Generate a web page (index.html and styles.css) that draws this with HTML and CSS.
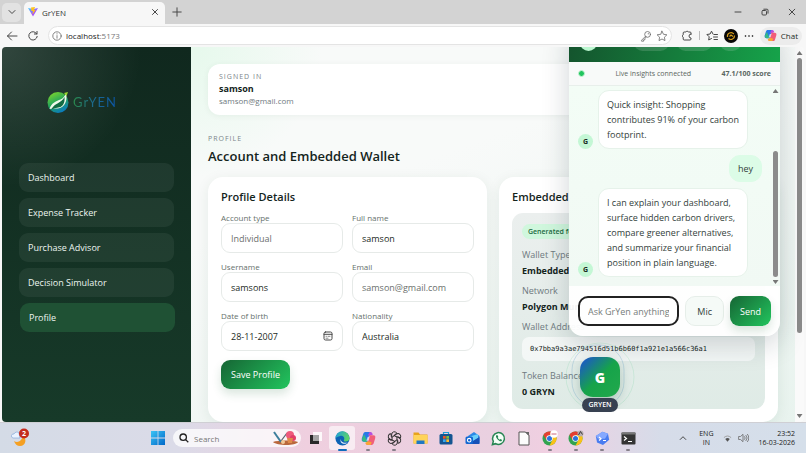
FILE: index.html
```html
<!DOCTYPE html>
<html lang="en">
<head>
    <meta charset="UTF-8">
    <meta name="viewport" content="width=device-width, initial-scale=1.0">
    <title>GrYEN</title>
    <link rel="stylesheet" href="styles.css">
</head>
<body>

<!-- Tab strip -->
<header class="tabstrip">
    <button class="tab-menu" aria-label="Tab actions">
        <svg width="10" height="10" viewBox="0 0 10 10"><path class="line" d="M2 3.5l3 3 3-3"/></svg>
    </button>
    <div class="tab">
        <svg width="10" height="10" viewBox="0 0 20 20">
            <defs><linearGradient id="vite" x1="0" y1="0" x2="1" y2="1"><stop offset="0" stop-color="#41d1ff"/><stop offset=".6" stop-color="#a855f7"/></linearGradient></defs>
            <path fill="url(#vite)" d="M0 2l10 17L20 2l-9 2z"/>
            <path fill="#ffc21c" d="M6 1l8-1-2 6h3l-6 9 1-7H7z"/>
        </svg>
        <span class="tab-title">GrYEN</span>
        <button class="plain" aria-label="Close tab">
            <svg width="8" height="8" viewBox="0 0 8 8"><path class="line" d="M1.5 1.5l5 5M6.5 1.5l-5 5"/></svg>
        </button>
    </div>
    <button class="plain new-tab" aria-label="New tab">
        <svg width="10" height="10" viewBox="0 0 10 10"><path class="line" d="M5 .8v8.4M.8 5h8.4"/></svg>
    </button>
    <div class="window-controls">
        <button class="plain" aria-label="Minimize"><svg width="8" height="8" viewBox="0 0 8 8"><path class="line" d="M1 4h6"/></svg></button>
        <button class="plain" aria-label="Restore"><svg width="8" height="8" viewBox="0 0 8 8"><rect class="line" x="1" y="2.5" width="4.5" height="4.5" rx="1"/><path class="line" d="M2.8 1.2H6a1 1 0 0 1 1 1v3"/></svg></button>
        <button class="plain" aria-label="Close"><svg width="8" height="8" viewBox="0 0 8 8"><path class="line" d="M1.2 1.2l5.6 5.6M6.8 1.2L1.2 6.8"/></svg></button>
    </div>
</header>

<!-- Address bar -->
<nav class="toolbar">
    <button class="plain" aria-label="Back"><svg width="12" height="12" viewBox="0 0 12 12"><path class="line" d="M11 6H1.5M5.5 2L1.5 6l4 4"/></svg></button>
    <button class="plain" aria-label="Refresh"><svg width="12" height="12" viewBox="0 0 12 12"><path class="line" d="M9.8 4A4.2 4.2 0 1 0 10.2 6.4M10 1.4V4H7.4"/></svg></button>
    <div class="address">
        <svg width="10" height="10" viewBox="0 0 10 10"><circle class="line thin" cx="5" cy="5" r="4.2"/><path class="line thin" d="M5 4.6v2.6M5 2.7v.3"/></svg>
        <span class="url">localhost<span class="port">:5173</span></span>
        <svg width="12" height="12" viewBox="0 0 12 12"><circle class="line thin" cx="7.6" cy="4.4" r="2.9"/><path class="line thin" d="M5.4 6.4L1.6 10.2v1h2V9.8h1.3V8.3l1.3-1.2M8.3 3.5v.5"/></svg>
        <svg width="12" height="12" viewBox="0 0 12 12"><path class="line thin" d="M6 1.2l1.5 3.1 3.4.5-2.5 2.4.6 3.4L6 9l-3 1.6.6-3.4-2.5-2.4 3.4-.5z"/></svg>
    </div>
    <div class="extensions">
        <svg width="12" height="12" viewBox="0 0 12 12"><path class="line" d="M10 4V3a1 1 0 0 0-1-1H7.3a1.3 1.3 0 0 0-2.4 0H3.2a1 1 0 0 0-1 1v1.800a1.3 1.3 0 0 0 0 2.4V9a1 1 0 0 0 1 1H9a1 1 0 0 0 1-1V8a2 2 0 1 1 0-4z"/></svg>
        <i class="divider"></i>
        <svg width="12" height="12" viewBox="0 0 12 12"><path class="line" d="M7 4L5.5 1.2 4.1 4l-3.2.5 2.3 2.3-.5 3.2 2.8-1.5M8 4.5h3.5M7.5 7h4M8 9.5h3.5"/></svg>
        <svg width="14" height="14" viewBox="0 0 14 14"><circle cx="7" cy="7" r="7" fill="#080808"/><path d="M3.5 8A3.6 3.6 0 0 1 9.8 5M10.500 6.500A3.600 3.600 0 0 1 4.500 9.500M5.500 7.500L7 6l2 1.500" fill="none" stroke="#d79d1c" stroke-width="1.2"/></svg>
        <svg width="10" height="10" viewBox="0 0 10 10"><circle cx="1.5" cy="5" r=".8"/><circle cx="5" cy="5" r=".8"/><circle cx="8.5" cy="5" r=".8"/></svg>
        <button class="copilot">
            <svg width="13" height="13" viewBox="0 0 14 14"><use href="#copilot-shape"/></svg>
            Chat
        </button>
    </div>
</nav>

<!-- Web page -->
<div class="viewport">
    <aside class="sidebar">
        <div class="brand">
            <svg width="24" height="24" viewBox="0 0 24 24">
                <defs><linearGradient id="globe" x1=".2" y1="0" x2=".7" y2="1"><stop offset="0" stop-color="#7ed62c"/><stop offset=".5" stop-color="#22a45c"/><stop offset="1" stop-color="#0878c8"/></linearGradient></defs>
                <circle cx="12" cy="12.5" r="10.5" fill="url(#globe)"/>
                <path d="M3.5 19c2-6.5 7-8 11-9.5 2.5-1 4.5-3.5 5.5-6 1.5 6-.5 11-4 13.5-4 2.500-8 1-12.500 2z" fill="#eef8ea"/>
                <path d="M5 20C9 12 15 14 18.5 7c.5 5-1 8.5-4 10-3 1.2-6 .5-9.500 3z" fill="#126b43"/>
                <path d="M18 3l4-1-1.5 4" fill="#9bda2e"/>
            </svg>
            <span class="brand-name">GrYEN</span>
        </div>
        <nav class="menu">
            <a href="#">Dashboard</a>
            <a href="#">Expense Tracker</a>
            <a href="#">Purchase Advisor</a>
            <a href="#">Decision Simulator</a>
            <a href="#" class="active">Profile</a>
        </nav>
    </aside>

    <main class="content">
        <section class="account">
            <p class="eyebrow">SIGNED IN</p>
            <strong class="account-name">samson</strong>
            <p class="account-email">samson@gmail.com</p>
        </section>

        <p class="eyebrow">PROFILE</p>
        <h1>Account and Embedded Wallet</h1>

        <div class="cards">
            <form class="card">
                <h2>Profile Details</h2>
                <div class="fields">
                    <div class="field">
                        <label for="type">Account type</label>
                        <input type="text" id="type" value="Individual" disabled>
                    </div>
                    <div class="field">
                        <label for="name">Full name</label>
                        <input type="text" id="name" value="samson">
                    </div>
                    <div class="field">
                        <label for="username">Username</label>
                        <input type="text" id="username" value="samsons">
                    </div>
                    <div class="field">
                        <label for="email">Email</label>
                        <input type="email" id="email" value="samson@gmail.com" disabled>
                    </div>
                    <div class="field">
                        <label for="dob">Date of birth</label>
                        <div class="date-box">
                            <input type="text" id="dob" value="28-11-2007">
                            <button type="button" class="plain" aria-label="Open calendar">
                                <svg width="10" height="10" viewBox="0 0 10 10"><rect class="line" x="1" y="1" width="8" height="8" rx="1.5"/><path class="line" d="M1 3.3h8"/><path class="line thin" d="M3 5.300h.5M5 5.300h2M3 7.200h2"/></svg>
                            </button>
                        </div>
                    </div>
                    <div class="field">
                        <label for="nationality">Nationality</label>
                        <input type="text" id="nationality" value="Australia">
                    </div>
                </div>
                <button type="button" class="primary">Save Profile</button>
            </form>

            <section class="card">
                <h2>Embedded Wallet</h2>
                <div class="wallet">
                    <span class="badge">Generated for you</span>
                    <dl>
                        <dt>Wallet Type</dt>
                        <dd>Embedded</dd>
                        <dt>Network</dt>
                        <dd>Polygon Mumbai</dd>
                        <dt>Wallet Address</dt>
                        <dd class="hash">0x7bba9a3ae794516d51b6b60f1a921e1a566c36a1</dd>
                        <dt>Token Balance</dt>
                        <dd>0 GRYN</dd>
                    </dl>
                </div>
            </section>
        </div>
    </main>

    <div class="scrollbar page-scroll"><i class="up"></i><i class="thumb"></i><i class="down"></i></div>

    <!-- Chat assistant -->
    <section class="chat">
        <div class="chat-head">
            <i class="chat-logo"></i>
            <i class="pill"></i>
            <i class="pill"></i>
            <i class="pill small"></i>
        </div>
        <div class="chat-status">
            <i class="dot"></i>
            <span>Live insights connected</span>
            <strong>47.1/100 score</strong>
        </div>
        <div class="chat-body">
            <div class="messages">
                <div class="message">
                    <span class="avatar">G</span>
                    <p class="bubble">Quick insight: Shopping contributes 91% of your carbon footprint.</p>
                </div>
                <div class="message mine">
                    <p class="bubble">hey</p>
                </div>
                <div class="message">
                    <span class="avatar">G</span>
                    <p class="bubble">I can explain your dashboard, surface hidden carbon drivers, compare greener alternatives, and summarize your financial position in plain language.</p>
                </div>
            </div>
            <div class="scrollbar chat-scroll"><i class="up"></i><i class="thumb"></i><i class="down"></i></div>
        </div>
        <form class="composer">
            <input type="text" aria-label="Message" placeholder="Ask GrYen anything">
            <button type="button" class="secondary">Mic</button>
            <button type="button" class="primary">Send</button>
        </form>
    </section>

    <div class="launcher">
        <svg class="rings" width="72" height="72" viewBox="0 0 72 72"><rect x="8" y="4" width="52" height="62" rx="25" fill="none" stroke="#6aa3c8" stroke-opacity=".3"/><circle cx="36" cy="36" r="34" fill="none" stroke="#4fc586" stroke-opacity=".16"/></svg>
        <button class="launch-button">G</button>
        <span class="launch-label">GRYEN</span>
    </div>
</div>

<!-- Taskbar -->
<footer class="taskbar">
    <div class="widgets">
        <svg width="20" height="20" viewBox="0 0 20 20">
            <path d="M4 13c3 2 8 1 9-6 4 4 3 11-3 11-3 0-5-2-6-5z" fill="#f5a023"/>
            <path d="M3 10a2 2 0 0 1 1-4 3 3 0 0 1 5-1l1 5z" fill="#eaf3ff" stroke="#86a9d8" stroke-width=".7"/>
            <circle cx="14" cy="5.5" r="5" fill="#c42b1c"/>
            <text x="14" y="8" text-anchor="middle" class="count">2</text>
        </svg>
    </div>

    <div class="apps">
        <button class="app" aria-label="Start"><svg width="14" height="14" viewBox="0 0 14 14"><defs><linearGradient id="win" x2="1" y2="1"><stop stop-color="#3cc4f5"/><stop offset="1" stop-color="#0067c8"/></linearGradient></defs><path fill="url(#win)" d="M0 0h6.6v6.6H0zM7.4 0H14v6.6H7.4zM0 7.4h6.6V14H0zM7.4 7.4H14V14H7.4z"/></svg></button>
        <label class="search">
            <svg width="10" height="10" viewBox="0 0 10 10"><circle cx="4.2" cy="4.2" r="3.2" fill="none" stroke="#222" stroke-width="1.3"/><path d="M6.6 6.6l2.7 2.7" stroke="#222" stroke-width="1.3"/></svg>
            <input type="text" placeholder="Search" aria-label="Search">
            <svg width="28" height="16" viewBox="0 0 28 16"><path d="M2 12c5-2 19-2 25 0-2 4-21 4-25 0z" fill="#b9673c"/><path d="M3 2l7 10" stroke="#3d7e9c" stroke-width="2"/><path d="M16 3l-6 8" stroke="#55606c" stroke-width="1.2"/><circle cx="19" cy="5" r="4" fill="#ee5a7c"/><circle cx="22" cy="8" r="3" fill="#e23e68"/><path d="M16 8h6l-1 5h-4z" fill="#e08a4a"/><circle cx="12" cy="12" r="2" fill="#f2c896"/></svg>
        </label>
        <button class="app" aria-label="Task view"><svg width="14" height="14" viewBox="0 0 14 14"><path fill="#292929" d="M1 4h9v9H1z"/><path fill="#fff" fill-opacity=".85" d="M4 1h9v9H4z"/><path fill="#a4a4a4" d="M4 4h6v6H4z"/></svg></button>
        <button class="app current" aria-label="Edge"><svg width="15" height="15" viewBox="0 0 16 16"><defs><linearGradient id="edge" x2="1" y2=".3"><stop stop-color="#1d9ddf"/><stop offset="1" stop-color="#5bd36a"/></linearGradient></defs><circle cx="8" cy="8" r="7.5" fill="#0d63b5"/><path fill="url(#edge)" d="M.5 8A7.5 7.5 0 0 1 15.5 7.5c0 2.5-2 3.8-4 3.8-1.8 0-2.5-.8-2-1.5C11 7 8.5 4.8 5.5 5.2 3 5.5 1 7 .5 8z"/><path fill="#fff" d="M6.5 8c-1 3 2 5.5 7 4.3-3 3-9.500 1-7-4.300z" fill-opacity=".9"/></svg></button>
        <button class="app running" aria-label="Copilot"><svg width="15" height="15" viewBox="0 0 14 14"><g id="copilot-shape"><path fill="#2879e8" d="M4 1h5L6.5 10H3C1 10 .3 9 .8 7L2 3c.4-1.300 1-2 2-2z"/><path fill="#35b984" d="M1 7l2-4 3 7H3C1.5 10 .7 9 1 7z"/><path fill="#b550df" d="M8 1h1c1 0 1.5.8 2 2.5l-3 1L6.5 4z"/><path fill="#f15e79" d="M8 4h3.5c1.7 0 2.2 1 1.7 3L12 11c-.4 1.300-1 2-2 2H5z"/><path fill="#f8a636" d="M6.5 9.5l3.5 1-1 2.5H6c-1.200 0-1.700-.8-2-2z"/><path fill="#fff" d="M6.2 5.5l2-.5L7 9l-2 .2z" fill-opacity=".7"/></g></svg></button>
        <button class="app running" aria-label="ChatGPT"><svg width="15" height="15" viewBox="0 0 16 16"><g fill="none" stroke="#2b2b2b"><path id="petal" d="M8 5L5 6.700V3.800a2.900 2.900 0 0 1 5.500-1.400L8 4"/><use href="#petal" transform="rotate(60 8 8)"/><use href="#petal" transform="rotate(120 8 8)"/><use href="#petal" transform="rotate(180 8 8)"/><use href="#petal" transform="rotate(240 8 8)"/><use href="#petal" transform="rotate(300 8 8)"/></g></svg></button>
        <button class="app" aria-label="File Explorer"><svg width="15" height="14" viewBox="0 0 15 14"><path fill="#e8a31c" d="M.5 1.5h5l1.5 2h7.5v9H.5z"/><path fill="#ffd45a" d="M.5 4h14v8.5H.5z"/><path fill="#1f78c4" d="M3.5 9.5h8V13h-8z"/></svg></button>
        <button class="app" aria-label="Store"><svg width="14" height="14" viewBox="0 0 14 14"><path d="M4.5 4V1.5h5V4" fill="none" stroke="#1b9fd9" stroke-width="1.2"/><rect x=".5" y="3" width="13" height="10.5" rx="1.5" fill="#145591"/><path fill="#f05325" d="M4 5h2.7v2.7H4z"/><path fill="#80bc3f" d="M7.3 5H10v2.7H7.3z"/><path fill="#37a8ec" d="M4 8.3h2.7V11H4z"/><path fill="#fdbb30" d="M7.3 8.3H10V11H7.3z"/></svg></button>
        <button class="app" aria-label="Outlook"><svg width="15" height="14" viewBox="0 0 15 14"><path fill="#2a89e6" d="M3 5l6-4 5.5 4v6.5l-1 1.500H4z"/><path fill="#6bd0fa" d="M5 5.5L13 3v4l-5 3z"/><path fill="#1551b8" d="M8 10l6.5-4v7H6z"/><rect x=".5" y="5.5" width="7.5" height="7.5" rx="1.5" fill="#1267d2"/><circle cx="4.2" cy="9.2" r="1.8" fill="none" stroke="#fff" stroke-width="1.1"/></svg></button>
        <button class="app" aria-label="WhatsApp"><svg width="15" height="15" viewBox="0 0 16 16"><path d="M1.5 14.5l1-3.5A6.3 6.3 0 1 1 5 13.5z" fill="#f4fff7" stroke="#268553" stroke-width="1.6"/><path d="M5.6 4.5c-1.5 1.5 2.5 7 5.5 6.5l.8-1.5-1.8-1-.9.8c-1-.4-1.700-1.200-2-2l.6-.9-.7-1.900z" fill="#268553"/></svg></button>
        <button class="app" aria-label="LibreOffice"><svg width="12" height="15" viewBox="0 0 12 15"><path d="M1 1h6.5L11 4.5V14H1z" fill="#fcfcfc" stroke="#555"/><path d="M7 1l4 4V1z" fill="#666"/></svg></button>
        <button class="app running" aria-label="Chrome"><svg width="16" height="16" viewBox="0 0 16 16"><g id="chrome-shape"><circle cx="7.5" cy="8.5" r="7" fill="#32a350"/><path fill="#e53e30" d="M1.4 5A7 7 0 0 1 13.6 5H7.5l-3 5z"/><path fill="#fbc116" d="M13.6 5a7 7 0 0 1-6.100 10.500L10.500 10l-3-5z"/><circle cx="7.5" cy="8.5" r="3.2" fill="#fff"/><circle cx="7.5" cy="8.5" r="2.5" fill="#2b73dd"/></g><circle cx="12" cy="4" r="3.8" fill="#fff"/><path d="M9.5 4h5" stroke="#cf6679"/></svg></button>
        <button class="app running" aria-label="Chrome profile"><svg width="16" height="16" viewBox="0 0 16 16"><use href="#chrome-shape"/><circle cx="12.5" cy="3.500" r="3" fill="#b8aeb0"/><path d="M10.5 5l2-3.500 2 3" stroke="#3c393b" fill="none"/></svg></button>
        <button class="app running" aria-label="Dev shell"><svg width="15" height="15" viewBox="0 0 15 15"><path fill="#487cf0" d="M7.5.8l5.5 2 1.2 6L8 14l-6-2.500L.8 5z"/><path fill="#85a9ff" d="M7.5.8l5.5 2-3 5H3L.8 5z"/><path d="M4 6l2 1.8-2 1.700M8 9.500h3" fill="none" stroke="#fff" stroke-width="1.2"/></svg></button>
        <button class="app running" aria-label="Terminal"><svg width="15" height="13" viewBox="0 0 15 13"><rect x=".5" y=".5" width="14" height="12" rx="1" fill="#343434"/><path fill="#777" d="M.5.5h14v2H.5z"/><path d="M3 4.5l2.500 2L3 8.500M7 9.500h4" fill="none" stroke="#fff" stroke-width="1.2"/></svg></button>
    </div>

    <div class="tray">
        <svg width="8" height="8" viewBox="0 0 8 8"><path class="line" d="M1.2 5.5L4 2.7l2.8 2.8"/></svg>
        <span class="lang">ENG<br>IN</span>
        <svg width="9" height="9" viewBox="0 0 10 10"><path d="M1 4a6 6 0 0 1 8 0" fill="none" stroke="#999"/><path d="M2.5 5.5a4 4 0 0 1 5 0L5 8.5z" fill="#555"/></svg>
        <svg width="11" height="10" viewBox="0 0 11 10"><path class="line thin" d="M1 3.5h1.5L5 1.3v7.4L2.5 6.5H1zM6.5 3.5a2 2 0 0 1 0 3M8 2.3a4 4 0 0 1 0 5.4M9.5 1.3a5.5 5.5 0 0 1 0 7.4"/></svg>
        <span class="clock">23:52<br>16-03-2026</span>
    </div>
</footer>

</body>
</html>
```

FILE: styles.css
```css
* {
    box-sizing: border-box;
}

body {
    margin: 0;
    height: 100vh;
    display: flex;
    flex-direction: column;
    overflow: hidden;
    font-family: "Open Sans", "Noto Sans", sans-serif;
    font-size: 9px;
    color: #1b2a24;
    background-color: #f7f7f7;
}

h1, h2, p, dl, dd {
    margin: 0;
}

button, input {
    font-family: inherit;
    font-size: 9px;
    color: inherit;
}

svg {
    display: block;
    flex: none;
}

.line {
    fill: none;
    stroke: #484848;
    stroke-width: 1;
    stroke-linecap: round;
    stroke-linejoin: round;
}

.line.thin {
    stroke: #6a6a6a;
    stroke-width: 0.8;
}

.plain {
    display: flex;
    padding: 0;
    border: none;
    background: none;
}

/* Browser window */
.tabstrip {
    display: flex;
    align-items: center;
    height: 24px;
    padding: 0 10px 0 2px;
    background-color: #d3d3d3;
}

.tab-menu {
    display: flex;
    align-items: center;
    justify-content: center;
    width: 19px;
    height: 19px;
    padding: 0;
    border: none;
    border-radius: 5px;
    background-color: #e2e2e2;
}

.tab {
    display: flex;
    align-items: center;
    gap: 4px;
    width: 141px;
    height: 22px;
    margin: 2px 0 0 3px;
    padding: 0 6px 2px 4px;
    border-radius: 5px 5px 0 0;
    background-color: #f7f7f7;
}

.tab-title {
    flex: 1;
    font-size: 8px;
    color: #333;
}

.new-tab {
    margin-left: 7px;
}

.window-controls {
    display: flex;
    gap: 19px;
    margin-left: auto;
}

.toolbar {
    display: flex;
    align-items: center;
    gap: 9px;
    height: 23px;
    padding: 0 4px 0 6px;
    background-color: #f7f7f7;
}

.address {
    flex: 1;
    display: flex;
    align-items: center;
    gap: 4px;
    height: 19px;
    padding: 0 3px;
    border: 1px solid #e4e4e4;
    border-radius: 10px;
    background-color: #fff;
}

.url {
    flex: 1;
    font-size: 8px;
    color: #222;
}

.port {
    color: #777;
}

.extensions {
    display: flex;
    align-items: center;
    gap: 6px;
}

.divider {
    width: 1px;
    height: 9px;
    background-color: #bbb;
}

.copilot {
    display: flex;
    align-items: center;
    gap: 4px;
    height: 18px;
    padding: 0 4px;
    border: none;
    border-radius: 9px;
    background-color: #ececec;
    font-size: 8px;
}

/* Page */
.viewport {
    position: relative;
    flex: 1;
    min-height: 0;
    display: flex;
    margin: 0 2px;
    border-radius: 4px;
    overflow: hidden;
    background: radial-gradient(circle at 190px 0, #e6f9ec, rgba(230, 249, 236, 0) 130px),
        linear-gradient(160deg, #f8faf9 40%, #e8f3ee);
}

.sidebar {
    flex: 0 0 189px;
    padding: 43px 17px 0;
    background: radial-gradient(circle at 0 0, rgba(255, 255, 255, 0.14), transparent 140px),
        linear-gradient(#10281e, #173a29);
}

.brand {
    display: flex;
    align-items: center;
    gap: 3px;
    padding-left: 27px;
}

.brand-name {
    font-family: Lato, sans-serif;
    font-size: 13px;
    letter-spacing: 1px;
    color: transparent;
    background: linear-gradient(90deg, #2b8b4b, #1c6a8c 45%, #0b55a8);
    -webkit-background-clip: text;
    background-clip: text;
}

.menu {
    display: flex;
    flex-direction: column;
    gap: 6px;
    margin-top: 49px;
}

.menu a {
    height: 29px;
    padding: 0 9px;
    border-radius: 9px;
    background-color: rgba(255, 255, 255, 0.06);
    font-size: 9px;
    line-height: 29px;
    color: #edf5f0;
    text-decoration: none;
}

.menu a.active {
    background-color: #1f5134;
    transform: translateX(1px);
}

.content {
    flex: 1;
    min-width: 0;
    padding: 17px;
}

.account {
    margin-bottom: 19px;
    padding: 8px 11px;
    border-radius: 12px;
    background-color: #fff;
    box-shadow: 0 1px 6px rgba(20, 60, 40, 0.06);
}

.eyebrow {
    font-size: 7px;
    line-height: 10px;
    letter-spacing: 1px;
    color: #7b858a;
}

.account-name {
    display: block;
    font-size: 9px;
    line-height: 13px;
    color: #14241c;
}

.account-email {
    font-size: 8px;
    line-height: 12px;
    color: #6f7a80;
}

h1 {
    margin: 3px 0 12px;
    font-size: 13px;
    font-weight: 600;
    line-height: 18px;
    color: #14241c;
}

.cards {
    display: grid;
    grid-template-columns: 1fr 1fr;
    gap: 12px;
}

.card {
    min-width: 0;
    padding: 13px;
    border-radius: 15px;
    background-color: #fff;
    box-shadow: 0 3px 14px rgba(20, 60, 40, 0.08);
}

h2 {
    margin: 0 0 10px;
    font-size: 11px;
    font-weight: 600;
    line-height: 13px;
    color: #14241c;
}

.fields {
    display: grid;
    grid-template-columns: repeat(2, minmax(0, 1fr));
    gap: 9px;
    margin-bottom: 9px;
}

.field label {
    display: block;
    font-size: 8px;
    line-height: 10px;
    color: #66716c;
}

.field > input,
.date-box {
    width: 100%;
    height: 30px;
    padding: 0 9px;
    border: 1px solid #e6eae8;
    border-radius: 9px;
    background-color: #fff;
}

.field input:disabled {
    color: #6b6f6d;
}

.date-box {
    display: flex;
    align-items: center;
}

.date-box input {
    flex: 1;
    min-width: 0;
    padding: 0;
    border: none;
}

.primary {
    height: 29px;
    padding: 0 10px;
    border: none;
    border-radius: 9px;
    background: linear-gradient(135deg, #166534, #22c55e);
    box-shadow: 0 5px 10px rgba(22, 101, 52, 0.16);
    color: #fff;
}

.wallet {
    padding: 11px 10px 10px;
    border-radius: 11px;
    background: linear-gradient(#ebefee, #dfebe6);
}

.badge {
    display: inline-block;
    padding: 0 6px;
    border-radius: 8px;
    background-color: #d0f7dd;
    font-size: 7px;
    font-weight: 600;
    line-height: 15px;
    vertical-align: top;
    color: #206b40;
}

.wallet dl {
    margin-top: 9px;
}

.wallet dt {
    line-height: 14px;
    color: #6f7a80;
}

.wallet dd {
    margin: 2px 0 6px;
    font-weight: bold;
    line-height: 14px;
    color: #14241c;
}

.wallet dd:last-child {
    margin-bottom: 0;
}

.wallet .hash {
    margin: 3px 0 8px;
    padding: 0 8px;
    border-radius: 7px;
    background-color: rgba(255, 255, 255, 0.6);
    font-family: "DejaVu Sans Mono", monospace;
    font-size: 7px;
    font-weight: normal;
    line-height: 24px;
}

/* Scrollbars */
.scrollbar {
    display: flex;
    flex-direction: column;
    align-items: center;
}

.up, .down {
    width: 6px;
    height: 4px;
    background-color: #777;
    clip-path: polygon(50% 0, 100% 100%, 0 100%);
}

.down {
    margin-top: auto;
    clip-path: polygon(0 0, 100% 0, 50% 100%);
}

.thumb {
    width: 5px;
    border-radius: 3px;
    background-color: #8b8b8b;
}

.page-scroll {
    flex: 0 0 9px;
    padding: 4px 0;
    background-color: #fafafa;
}

.page-scroll .thumb {
    height: 75%;
    margin-top: 3px;
}

/* Chat */
.chat {
    position: absolute;
    right: 24px;
    bottom: 86px;
    width: 211px;
    border-radius: 14px;
    overflow: hidden;
    background-color: rgba(255, 255, 255, 0.95);
    box-shadow: 0 8px 28px rgba(20, 40, 50, 0.2);
}

.chat-head {
    display: flex;
    align-items: flex-end;
    gap: 8px;
    height: 40px;
    padding: 11px;
    background: linear-gradient(100deg, #14532d, #16a34a);
}

.chat-logo {
    width: 17px;
    height: 17px;
    margin-right: auto;
    border-radius: 50%;
    background-color: #bbf7d0;
}

.pill {
    width: 35px;
    height: 17px;
    border-radius: 9px;
    background-color: rgba(255, 255, 255, 0.14);
}

.pill.small {
    width: 21px;
    margin-right: 28px;
}

.chat-status {
    display: flex;
    align-items: center;
    justify-content: space-between;
    height: 24px;
    padding: 0 9px;
    border-bottom: 1px solid #e8efeb;
    background-color: #f8faf9;
    font-size: 7px;
    color: #5b6762;
}

.dot {
    width: 7px;
    height: 7px;
    border: 1px solid #c9f5d7;
    border-radius: 50%;
    background-color: #22c55e;
}

.chat-body {
    display: flex;
    height: 200px;
    background: linear-gradient(#f3fdf6, #f1f9f4);
}

.messages {
    flex: 1;
    display: flex;
    flex-direction: column;
    justify-content: flex-end;
    gap: 6px;
    padding: 0 9px 9px;
}

.message {
    display: flex;
    align-items: flex-end;
    gap: 5px;
}

.message.mine {
    justify-content: flex-end;
}

.avatar {
    flex: 0 0 15px;
    height: 15px;
    border-radius: 50%;
    background-color: #c4f7d5;
    font-size: 7px;
    font-weight: bold;
    line-height: 15px;
    text-align: center;
}

.bubble {
    max-width: 150px;
    padding: 6px 6px 6px 8px;
    border: 1px solid #e6f2ea;
    border-radius: 11px;
    background-color: #fff;
    font-size: 9px;
    line-height: 15px;
    color: #33413b;
}

.mine .bubble {
    padding: 5px 8px;
    border-color: #dcfce7;
    background-color: #dcfce7;
}

.chat-scroll {
    flex: 0 0 9px;
    padding: 3px 0 2px;
}

.chat-scroll .thumb {
    height: 126px;
    margin-top: auto;
}

.chat-scroll .down {
    margin-top: 3px;
}

.composer {
    display: flex;
    gap: 6px;
    padding: 10px 9px;
}

.composer input {
    flex: 1;
    min-width: 0;
    height: 30px;
    padding: 0 8px;
    border: 2px solid #222;
    border-radius: 10px;
    background-color: #fff;
}

.composer input::placeholder {
    color: #767d7a;
}

.composer .primary,
.secondary {
    height: 30px;
}

.secondary {
    padding: 0 11px;
    border: 1px solid #e6eee9;
    border-radius: 10px;
    background-color: #f5faf7;
    color: #33413b;
}

.launcher {
    position: absolute;
    right: 184px;
    bottom: 10px;
    display: flex;
    flex-direction: column;
    align-items: center;
    gap: 1px;
}

.rings {
    position: absolute;
    top: -16px;
}

.launch-button {
    z-index: 1;
    width: 40px;
    height: 40px;
    border: none;
    border-radius: 13px;
    background: linear-gradient(135deg, #1d4ed8, #16a34a 50%, #22a94c);
    box-shadow: 0 5px 12px rgba(20, 80, 50, 0.25);
    font-size: 14px;
    font-weight: 800;
    color: #fff;
}

.launch-label {
    z-index: 1;
    padding: 0 6px;
    border-radius: 7px;
    background-color: #374151;
    font-size: 7px;
    font-weight: 600;
    line-height: 14px;
    color: #fff;
}

/* Taskbar */
.taskbar {
    display: flex;
    align-items: center;
    height: 31px;
    padding: 0 11px 0 10px;
    border-top: 1px solid #cfcfd4;
    background: linear-gradient(90deg, #d4dbe6, #dbdbe8 22%, #efcfdf 38%, #e9d0e0 62%, #f0cfe1 68%, #d6dce9 82%, #d5dfea);
}

.widgets {
    flex: 1;
}

.count {
    font-size: 7px;
    font-weight: bold;
    fill: #fff;
}

.apps {
    display: flex;
    align-items: center;
}

.app {
    position: relative;
    display: flex;
    align-items: center;
    justify-content: center;
    width: 26px;
    height: 24px;
    padding: 0;
    border: none;
    border-radius: 3px;
    background: none;
}

.current {
    background-color: rgba(255, 255, 255, 0.6);
}

.running::after,
.current::after {
    content: "";
    position: absolute;
    bottom: -1px;
    width: 4px;
    height: 2px;
    border-radius: 1px;
    background-color: #86808a;
}

.current::after {
    width: 9px;
    background-color: #0f6cbd;
}

.search {
    display: flex;
    align-items: center;
    gap: 5px;
    width: 128px;
    height: 18px;
    margin: 0 2px;
    padding: 0 2px 0 6px;
    border-radius: 9px;
    background-color: rgba(255, 255, 255, 0.75);
}

.search input {
    flex: 1;
    min-width: 0;
    padding: 0;
    border: none;
    background: none;
    font-size: 8px;
}

.tray {
    flex: 0 0 154px;
    display: flex;
    align-items: center;
    justify-content: flex-end;
    gap: 6px;
    font-size: 7px;
    line-height: 9px;
    color: #222;
}

.lang {
    margin: 0 4px 0 6px;
    text-align: center;
}

.clock {
    margin-left: 3px;
    text-align: right;
}
```
